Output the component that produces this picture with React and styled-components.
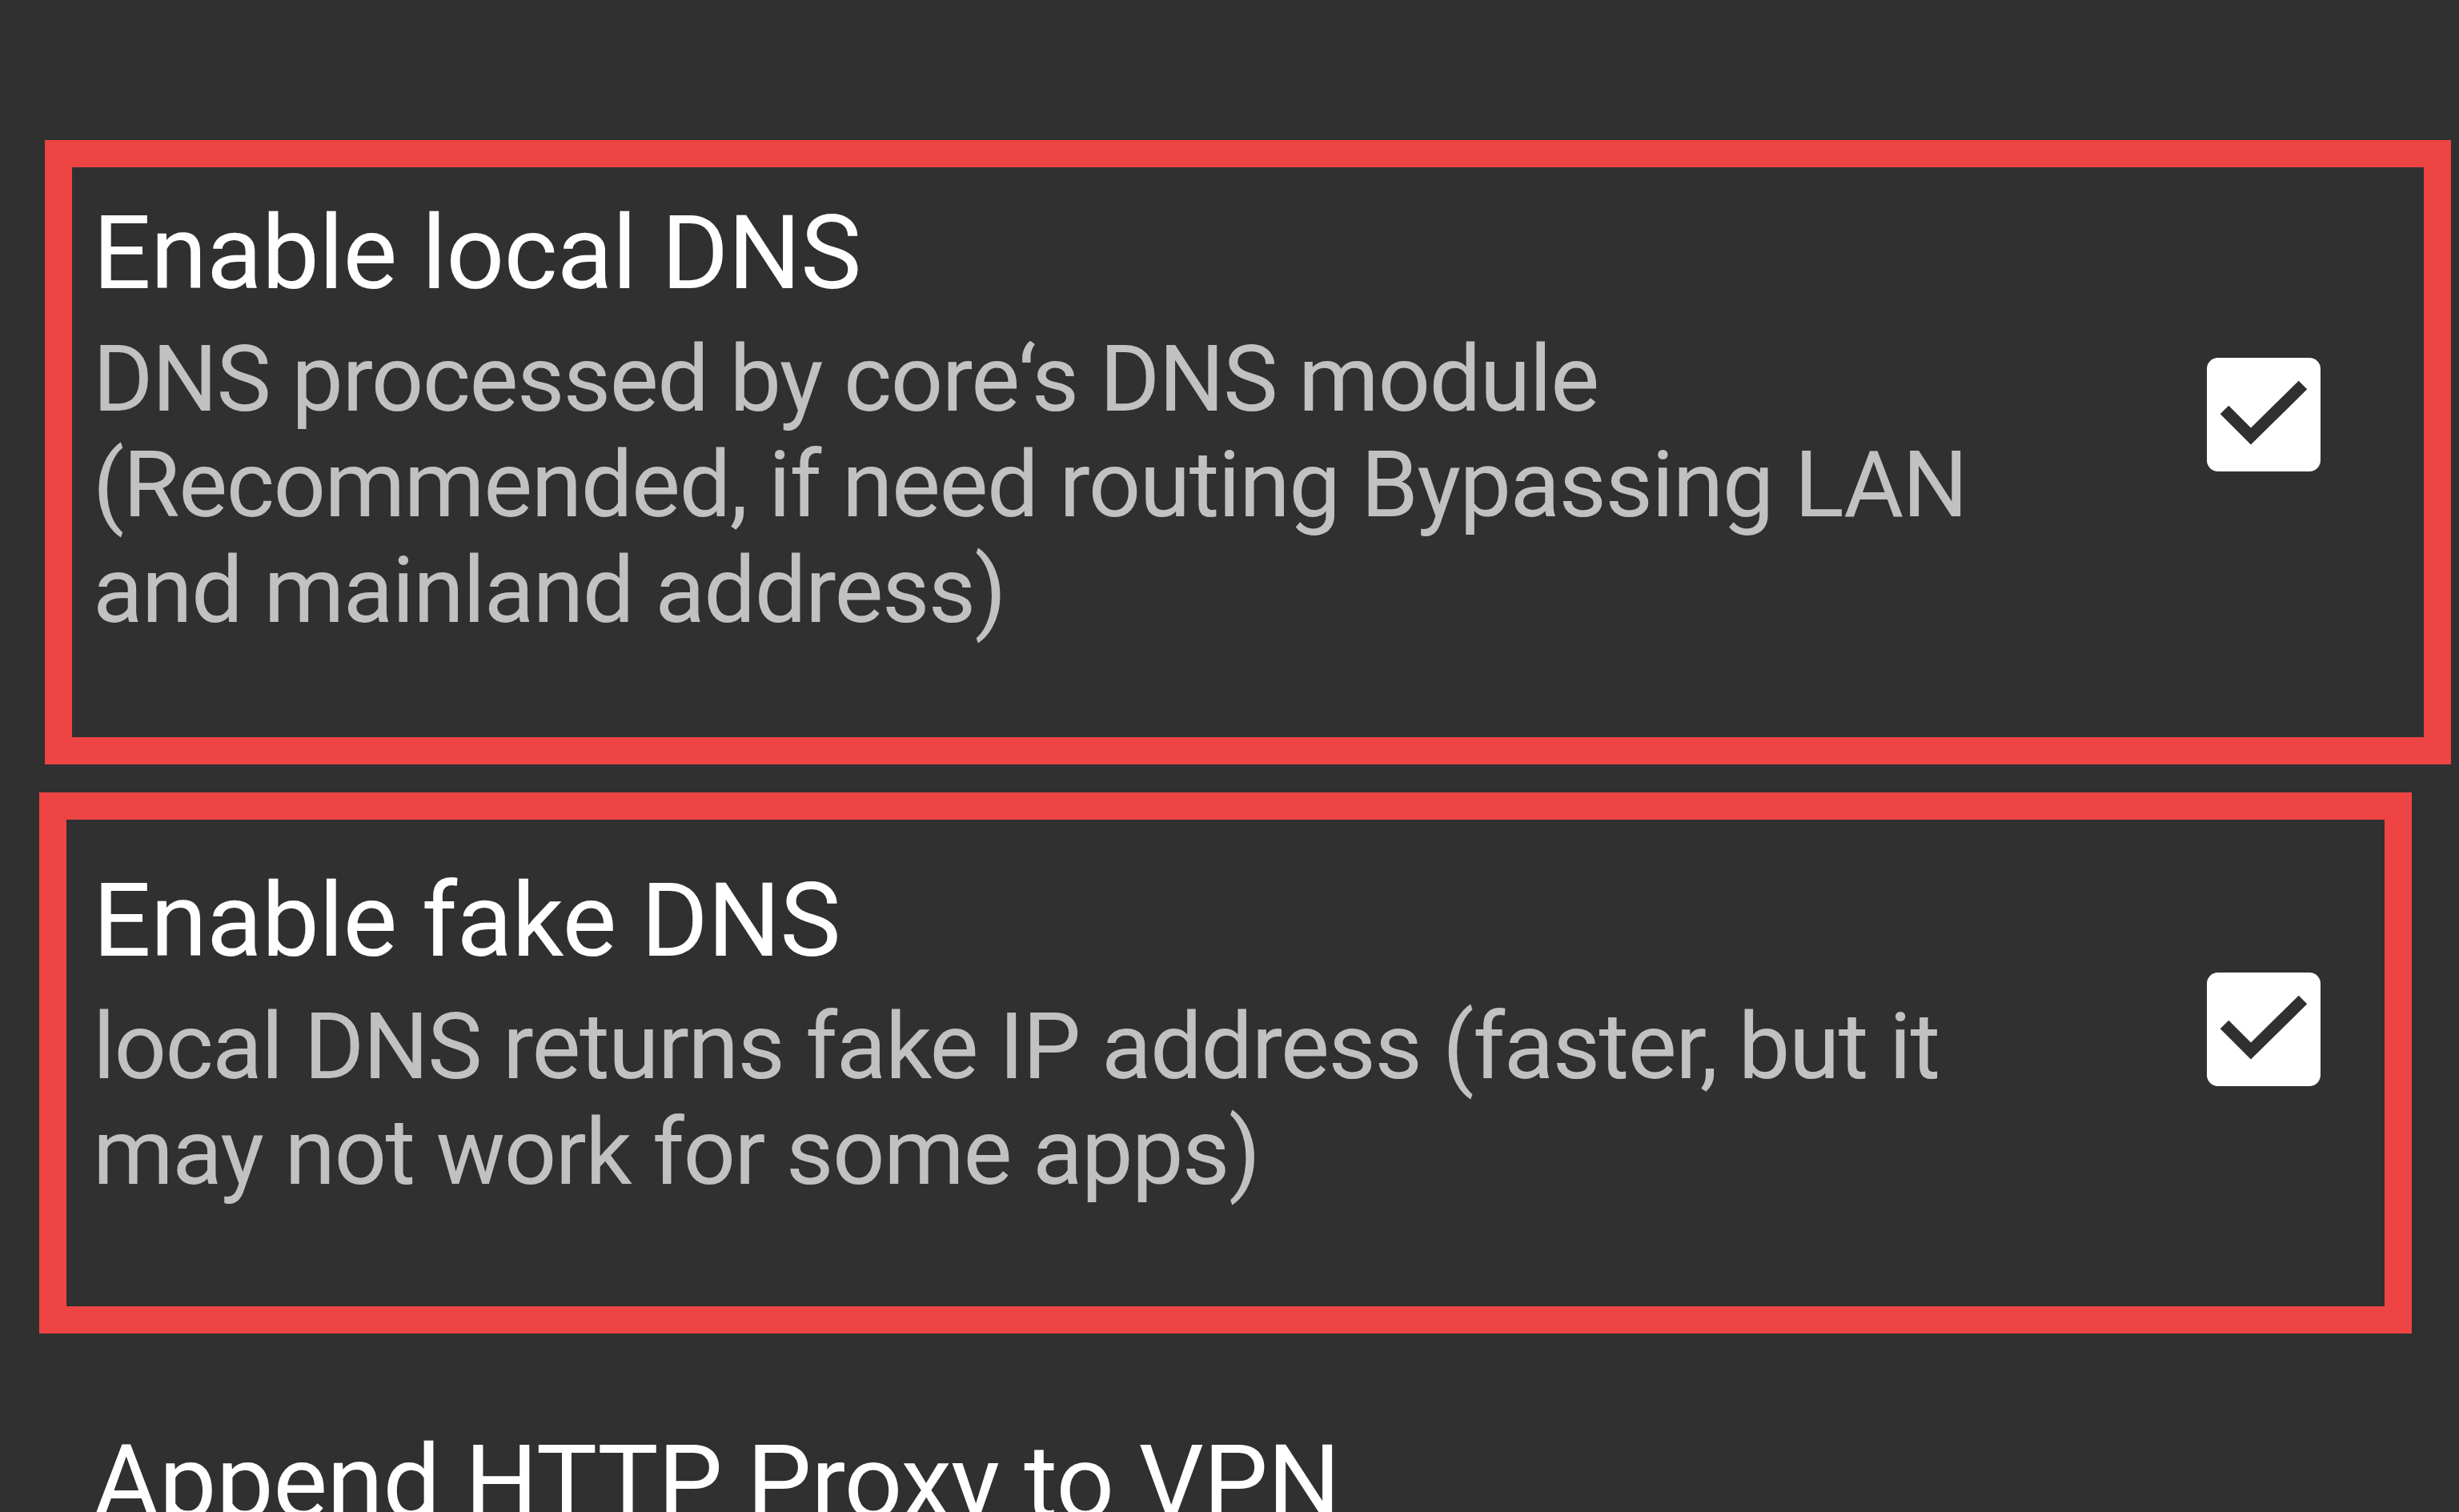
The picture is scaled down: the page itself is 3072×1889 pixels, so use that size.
import styled, { createGlobalStyle } from "styled-components";

const GlobalStyle = createGlobalStyle`
  html,
  body {
    margin: 0;
    padding: 0;
    background: #303030;
  }
  body {
    font-family: Roboto, "Noto Sans", sans-serif;
  }
`;

const Screen = styled.div`
  height: 100vh;
  overflow: hidden;
  box-sizing: border-box;
  padding-top: 101px;
  background: #303030;
`;

const Row = styled.div`
  position: relative;
  display: flex;
  align-items: center;
  padding: 131px 173px 131px 116px;
`;

const TextBlock = styled.div`
  width: 2440px;
  flex: none;
`;

const Title = styled.div`
  font-size: 128px;
  line-height: 168px;
  letter-spacing: -0.7px;
  color: #ffffff;
`;

const Summary = styled.div`
  margin-top: 8px;
  font-size: 115px;
  line-height: 132px;
  letter-spacing: -1.5px;
  color: #c1c1c1;
`;

const CheckBox = styled.div`
  margin-left: auto;
  width: 142px;
  height: 142px;
  flex: none;
  border-radius: 14px;
  background: #ffffff;
  svg {
    display: block;
  }
`;

// red annotation frame drawn over a row
const Highlight = styled.div`
  position: absolute;
  top: ${(p) => p.$top}px;
  bottom: ${(p) => p.$bottom}px;
  left: ${(p) => p.$left}px;
  right: ${(p) => p.$right}px;
  border: 34px solid #ef4444;
  pointer-events: none;
`;

const Check = () => (
  <CheckBox>
    <svg width="142" height="142" viewBox="0 0 142 142">
      <polyline
        points="22,65 55,98 120,34"
        fill="none"
        stroke="#303030"
        strokeWidth="15"
        strokeLinecap="butt"
        strokeLinejoin="miter"
      />
    </svg>
  </CheckBox>
);

const prefs = [
  {
    title: "Enable local DNS",
    summary:
      "DNS processed by core‘s DNS module (Recommended, if need routing Bypassing LAN and mainland address)",
    frame: { top: 74, bottom: -20, left: 56, right: 10 },
  },
  {
    title: "Enable fake DNS",
    summary:
      "local DNS returns fake IP address (faster, but it may not work for some apps)",
    frame: { top: 55, bottom: -29, left: 49, right: 59 },
  },
  {
    title: "Append HTTP Proxy to VPN",
    summary:
      "HTTP proxy will be used directly from (browser/ some supported apps), without going through the virtual NIC device (Android 10+)",
  },
];

export default function App() {
  return (
    <>
      <GlobalStyle />
      <Screen>
        {prefs.map((p) => (
          <Row key={p.title}>
            <TextBlock>
              <Title>{p.title}</Title>
              <Summary>{p.summary}</Summary>
            </TextBlock>
            <Check />
            {p.frame && (
              <Highlight
                $top={p.frame.top}
                $bottom={p.frame.bottom}
                $left={p.frame.left}
                $right={p.frame.right}
              />
            )}
          </Row>
        ))}
      </Screen>
    </>
  );
}
